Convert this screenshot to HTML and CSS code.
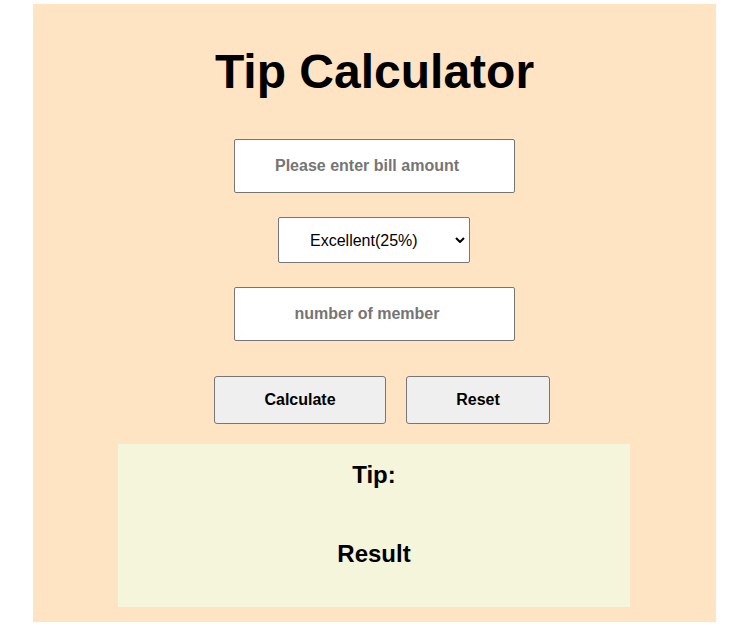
FILE: index.html
```html
<!DOCTYPE html>
<html lang="en">
<head>
<meta charset="utf-8">
<title>Tip Calculator</title>
<link rel="stylesheet" href="styles.css">
</head>
<body>
<div class="app">
  <h1 class="title">Tip Calculator</h1>
  <input class="field" type="text" placeholder="Please enter bill amount">
  <div class="select-wrap">
    <select class="service">
      <option>Excellent(25%)</option>
      <option>Good(20%)</option>
      <option>Okay(15%)</option>
      <option>Bad(10%)</option>
    </select>
    <svg class="chevron" width="10" height="6" viewBox="0 0 10 6" aria-hidden="true"><path d="M1 1 L5 5 L9 1" fill="none" stroke="#000" stroke-width="2"/></svg>
  </div>
  <input class="field" type="text" placeholder="number of member">
  <div class="buttons">
    <button class="btn btn-calc" type="button">Calculate</button>
    <button class="btn btn-reset" type="button">Reset</button>
  </div>
  <div class="output">
    <h2 class="out-line">Tip:</h2>
    <h2 class="out-line out-result">Result</h2>
  </div>
</div>
</body>
</html>
```
FILE: styles.css
```css
html, body {
  margin: 0;
  padding: 0;
  background: #ffffff;
}

body {
  font-family: "Liberation Sans", Arial, sans-serif;
}

.app {
  margin: 4px 0 0 33px;
  width: 683px;
  height: 618px;
  box-sizing: border-box;
  background: #ffe4c4;
  display: flex;
  flex-direction: column;
  align-items: center;
  padding-top: 40px;
}

.title {
  margin: 0;
  font-size: 48px;
  line-height: 56px;
  font-weight: bold;
  color: #000;
}

.field {
  margin-top: 39px;
  width: 281px;
  height: 54px;
  box-sizing: border-box;
  border: 1px solid #767676;
  border-radius: 2px;
  background: #fff;
  padding: 0 17px 0 2px;
  text-align: center;
  font-family: "Liberation Sans", Arial, sans-serif;
  font-size: 16px;
  font-weight: bold;
  color: #000;
  outline: none;
}

.field::placeholder {
  color: #757575;
  font-weight: bold;
}

.select-wrap + .field {
  margin-top: 24px;
}

.select-wrap {
  position: relative;
  margin: 24px 1px 0 0;
  width: 192px;
  height: 46px;
}

.service {
  -webkit-appearance: none;
  appearance: none;
  width: 192px;
  height: 46px;
  box-sizing: border-box;
  border: 1px solid #767676;
  border-radius: 2px;
  background: #fff;
  padding: 0 0 0 31px;
  font-family: "Liberation Sans", Arial, sans-serif;
  font-size: 16px;
  color: #000;
  outline: none;
}

.chevron {
  position: absolute;
  left: 177px;
  top: 20px;
  pointer-events: none;
}

.buttons {
  margin-top: 35px;
  display: flex;
  gap: 20px;
  padding-left: 15px;
}

.btn {
  height: 48px;
  box-sizing: border-box;
  border: 1px solid #767676;
  border-radius: 3px;
  background: #efefef;
  font-family: "Liberation Sans", Arial, sans-serif;
  font-size: 16px;
  font-weight: bold;
  color: #000;
  padding: 0;
}

.btn-calc {
  width: 172px;
}

.btn-reset {
  width: 144px;
}

.output {
  margin: 20px 1px 0 0;
  width: 512px;
  height: 163px;
  box-sizing: border-box;
  background: #f5f5dc;
  padding-top: 17px;
  display: flex;
  flex-direction: column;
  align-items: center;
  gap: 51px;
}

.out-line {
  margin: 0;
  font-size: 24px;
  line-height: 28px;
  font-weight: bold;
  color: #000;
}
```
